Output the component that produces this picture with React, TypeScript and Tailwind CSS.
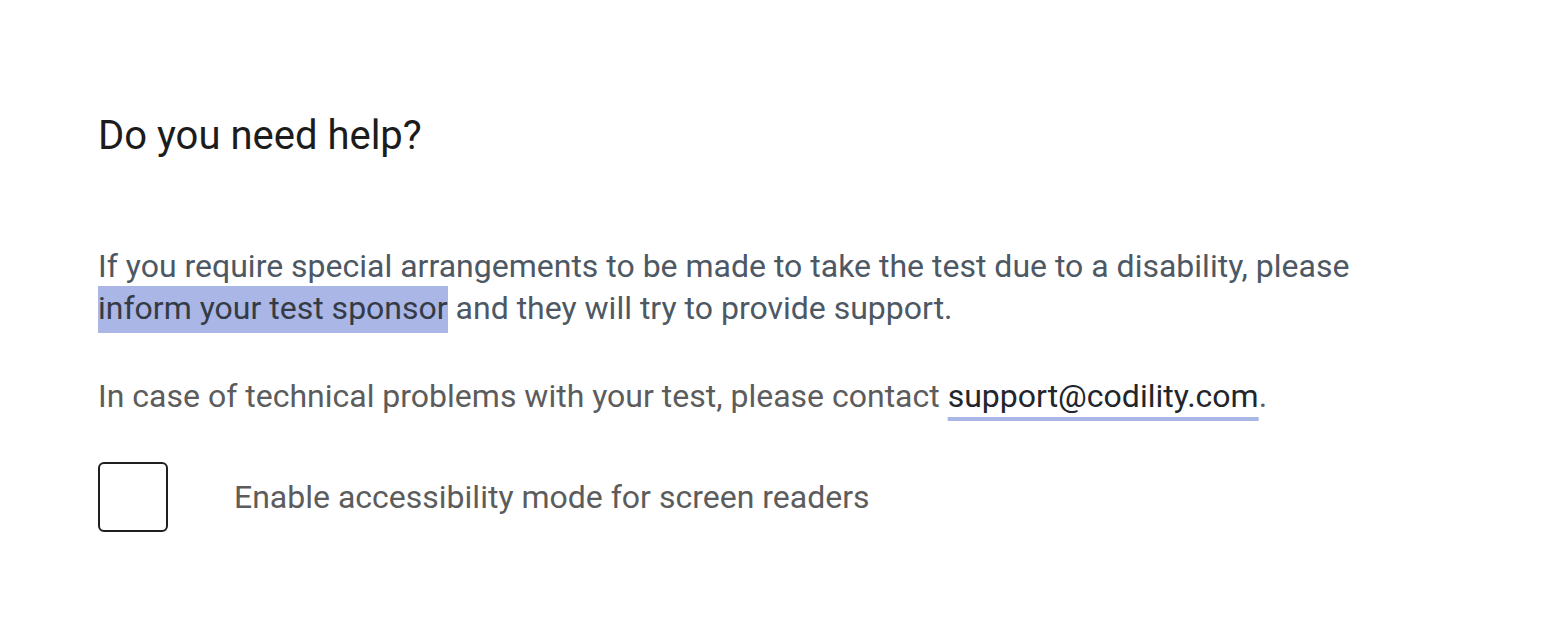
const App = () => {
  return (
    <div className="w-[1554px] h-[622px] bg-white font-['Roboto',sans-serif] pl-[98px] pt-[112px]">
      <h1 className="text-[40px] leading-[48px] text-[#1c1c1c] font-normal">Do you need help?</h1>
      <p className="mt-[85px] text-[32px] leading-[42px] text-[#4d5864] w-[1300px]">
        If you require special arrangements to be made to take the test due to a disability, please{" "}
        <span className="bg-[#a9b6e6] text-[#343b45] pt-[3px] pb-[6px]">inform your test sponsor</span> and they will
        try to provide support.
      </p>
      <p className="mt-[46px] text-[32px] leading-[42px] text-[#5c5c5c]">
        In case of technical problems with your test, please contact{" "}
        <a
          href="#"
          className="text-[#22262c] underline decoration-[#a9b6e6] decoration-[4px] underline-offset-[10px]"
        >
          support@codility.com
        </a>
        .
      </p>
      <label className="mt-[45px] flex items-center gap-[66px]">
        <span className="w-[70px] h-[70px] rounded-[6px] border-2 border-[#1f1f1f] block" />
        <span className="text-[32px] text-[#5c5c5c]">Enable accessibility mode for screen readers</span>
      </label>
    </div>
  );
};

export default App;
